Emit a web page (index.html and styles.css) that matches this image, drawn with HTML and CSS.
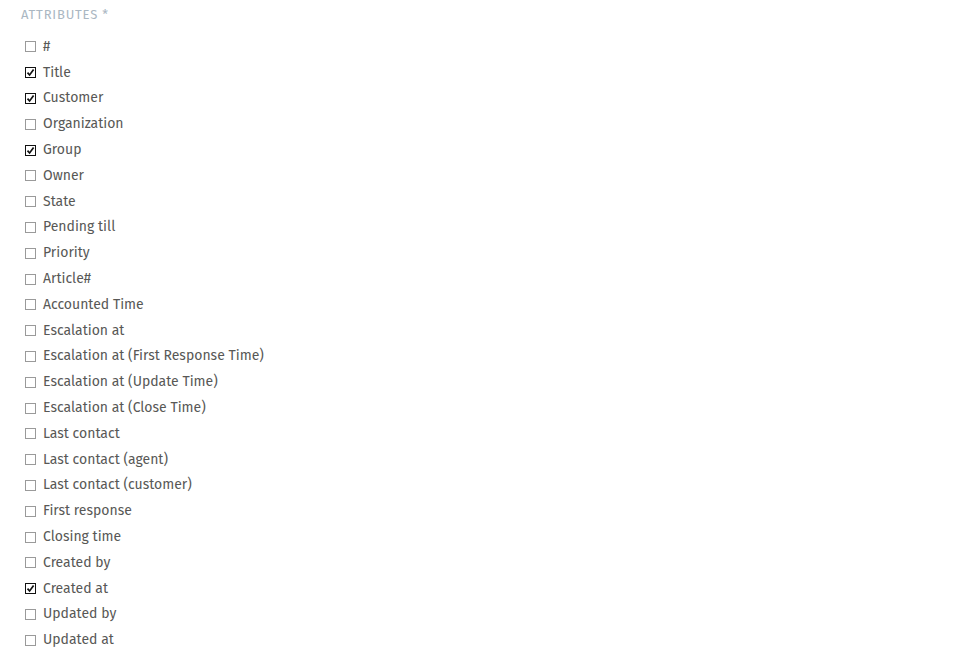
FILE: index.html
```html
<!DOCTYPE html>
<html>
<head>
<meta charset="utf-8">
<link rel="stylesheet" href="styles.css">
</head>
<body>
<div class="form-group">
  <div class="label">Attributes <span class="req">*</span></div>
  <ul class="checklist">
    <li><span class="box"></span><span class="txt">#</span></li>
    <li><span class="box checked"><svg viewBox="0 0 9 9" width="9" height="9"><path d="M1.5 4.6 L3.6 7 L7.6 1.6" fill="none" stroke="#111" stroke-width="1.7"/></svg></span><span class="txt">Title</span></li>
    <li><span class="box checked"><svg viewBox="0 0 9 9" width="9" height="9"><path d="M1.5 4.6 L3.6 7 L7.6 1.6" fill="none" stroke="#111" stroke-width="1.7"/></svg></span><span class="txt">Customer</span></li>
    <li><span class="box"></span><span class="txt">Organization</span></li>
    <li><span class="box checked"><svg viewBox="0 0 9 9" width="9" height="9"><path d="M1.5 4.6 L3.6 7 L7.6 1.6" fill="none" stroke="#111" stroke-width="1.7"/></svg></span><span class="txt">Group</span></li>
    <li><span class="box"></span><span class="txt">Owner</span></li>
    <li><span class="box"></span><span class="txt">State</span></li>
    <li><span class="box"></span><span class="txt">Pending till</span></li>
    <li><span class="box"></span><span class="txt">Priority</span></li>
    <li><span class="box"></span><span class="txt">Article#</span></li>
    <li><span class="box"></span><span class="txt">Accounted Time</span></li>
    <li><span class="box"></span><span class="txt">Escalation at</span></li>
    <li><span class="box"></span><span class="txt">Escalation at (First Response Time)</span></li>
    <li><span class="box"></span><span class="txt">Escalation at (Update Time)</span></li>
    <li><span class="box"></span><span class="txt">Escalation at (Close Time)</span></li>
    <li><span class="box"></span><span class="txt">Last contact</span></li>
    <li><span class="box"></span><span class="txt">Last contact (agent)</span></li>
    <li><span class="box"></span><span class="txt">Last contact (customer)</span></li>
    <li><span class="box"></span><span class="txt">First response</span></li>
    <li><span class="box"></span><span class="txt">Closing time</span></li>
    <li><span class="box"></span><span class="txt">Created by</span></li>
    <li><span class="box checked"><svg viewBox="0 0 9 9" width="9" height="9"><path d="M1.5 4.6 L3.6 7 L7.6 1.6" fill="none" stroke="#111" stroke-width="1.7"/></svg></span><span class="txt">Created at</span></li>
    <li><span class="box"></span><span class="txt">Updated by</span></li>
    <li><span class="box"></span><span class="txt">Updated at</span></li>
  </ul>
</div>
</body>
</html>
```
FILE: styles.css
```css
html, body {
  margin: 0;
  padding: 0;
  background: #fff;
}
body {
  font-family: "Fira Sans", Lato, "Open Sans", sans-serif;
  color: #585856;
  font-size: 14px;
}
.form-group {
  padding: 6px 0 0 21px;
}
.label {
  font-size: 13px;
  font-weight: 400;
  text-transform: uppercase;
  letter-spacing: 0.8px;
  color: #aab7c2;
  line-height: 18px;
  height: 28px;
}
.checklist {
  list-style: none;
  margin: 0;
  padding: 0 0 0 4px;
}
.checklist li {
  display: flex;
  align-items: center;
  height: 25.8px;
}
.box {
  width: 11px;
  height: 11px;
  box-sizing: border-box;
  border: 1px solid #9a9a9a;
  margin-right: 7px;
  flex: none;
  display: flex;
  align-items: center;
  justify-content: center;
}
.box.checked {
  border-color: #111;
}
.box svg {
  display: block;
}
.txt {
  line-height: 18px;
}
```
